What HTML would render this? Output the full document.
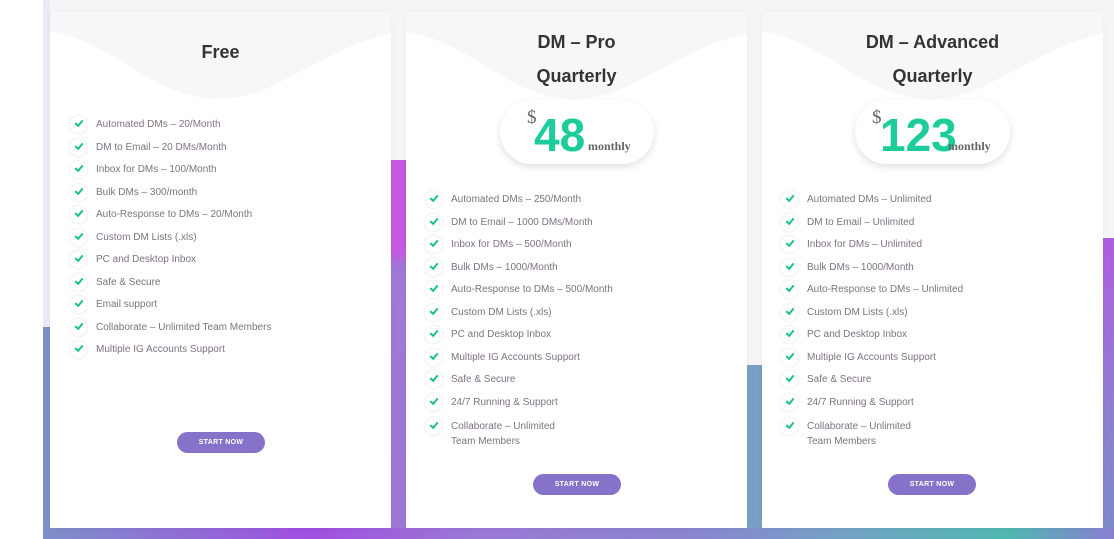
<!DOCTYPE html>
<html><head><meta charset="utf-8">
<style>
*{margin:0;padding:0;box-sizing:border-box}
body{width:1114px;height:539px;overflow:hidden;background:#fff;position:relative;font-family:"Liberation Sans",sans-serif}
.bg{position:absolute}
.card{position:absolute;top:12px;height:516px;background:#fff;border-radius:4px;overflow:hidden;box-shadow:0 0 6px rgba(0,0,0,.04)}
.wave{position:absolute;left:0;top:0}
.title{position:absolute;left:0;right:0;text-align:center;font-weight:bold;font-size:18px;color:#333}
.pill{position:absolute;height:64px;border-radius:32px;background:#fff;box-shadow:0 3px 8px rgba(0,0,0,.12)}
.dollar{position:absolute;font-family:"Liberation Serif",serif;font-size:19px;color:#666}
.num{position:absolute;font-size:46px;color:#1ccc9b;font-weight:bold}
.mon{position:absolute;font-family:"Liberation Serif",serif;font-weight:bold;font-size:12px;color:#666}
ul{position:absolute;list-style:none}
li{position:relative;height:22.5px;font-size:10px;color:#7d7280;padding-left:26px;line-height:12px}
li::before{content:"";position:absolute;left:0;top:-3px;width:17px;height:17px;border-radius:50%;background:#fff;box-shadow:0 0 3px rgba(0,0,0,.12)}
li::after{content:"";position:absolute;left:5px;top:1px;width:6px;height:3px;border-left:2px solid #1dbf8a;border-bottom:2px solid #1dbf8a;transform:rotate(-50deg)}
li.two{height:40px;line-height:15px}
li.two::before{top:-1px}
li.two::after{top:3px}
.btn{position:absolute;width:88px;height:21px;border-radius:11px;background:#8672c8;color:#fff;font-size:7px;font-weight:bold;text-align:center;line-height:21px;letter-spacing:.3px}
</style></head><body>
<div class="bg" style="left:43px;top:0;width:1071px;height:539px;background:#f5f5f7"></div>
<div class="bg" style="left:43px;top:0;width:7px;height:327px;background:#ebe9f5"></div>
<div class="bg" style="left:43px;top:327px;width:7px;height:212px;background:#7c90c6"></div>
<div class="bg" style="left:391px;top:160px;width:15px;height:379px;background:linear-gradient(#c458e0 0,#c458e0 90px,#9d7ad5 110px,#9a78d4 100%)"></div>
<div class="bg" style="left:747px;top:365px;width:15px;height:174px;background:#78a0c4"></div>
<div class="bg" style="left:1103px;top:238px;width:11px;height:301px;background:linear-gradient(#b05ee0,#8c80d0 60%,#7b8ac8)"></div>
<div class="bg" style="left:43px;top:528px;width:1071px;height:11px;background:linear-gradient(90deg,#7d8fc8 0%,#a04fe0 25%,#9a78d4 40%,#8a84d0 60%,#72a2c4 75%,#4fb7b0 90%,#8a7ed0 100%)"></div>

<!-- Card 1 -->
<div class="card" style="left:50px;width:341px">
<svg class="wave" width="341" height="110"><path d="M0 0H341V22C300 30 270 50 230 70 C190 92 150 92 110 72 C70 50 40 25 0 20Z" fill="#f7f7fa"/></svg>
<div class="title" style="top:30px">Free</div>
<ul style="left:20px;top:107px">
<li>Automated DMs – 20/Month</li><li>DM to Email – 20 DMs/Month</li><li>Inbox for DMs – 100/Month</li><li>Bulk DMs – 300/month</li><li>Auto-Response to DMs – 20/Month</li><li>Custom DM Lists (.xls)</li><li>PC and Desktop Inbox</li><li>Safe &amp; Secure</li><li>Email support</li><li>Collaborate – Unlimited Team Members</li><li>Multiple IG Accounts Support</li>
</ul>
<div class="btn" style="left:127px;top:420px">START NOW</div>
</div>

<!-- Card 2 -->
<div class="card" style="left:406px;width:341px">
<svg class="wave" width="341" height="110"><path d="M0 0H341V22C300 30 270 50 230 70 C190 92 150 92 110 72 C70 50 40 25 0 20Z" fill="#f7f7fa"/></svg>
<div class="title" style="top:20px">DM – Pro</div>
<div class="title" style="top:54px">Quarterly</div>
<div class="pill" style="left:94px;top:88px;width:154px"></div>
<div class="dollar" style="left:121px;top:95px">$</div>
<div class="num" style="left:128px;top:96px">48</div>
<div class="mon" style="left:182px;top:127px">monthly</div>
<ul style="left:19px;top:182px">
<li>Automated DMs – 250/Month</li><li>DM to Email – 1000 DMs/Month</li><li>Inbox for DMs – 500/Month</li><li>Bulk DMs – 1000/Month</li><li>Auto-Response to DMs – 500/Month</li><li>Custom DM Lists (.xls)</li><li>PC and Desktop Inbox</li><li>Multiple IG Accounts Support</li><li>Safe &amp; Secure</li><li>24/7 Running &amp; Support</li><li class="two">Collaborate – Unlimited<br>Team Members</li>
</ul>
<div class="btn" style="left:127px;top:462px">START NOW</div>
</div>

<!-- Card 3 -->
<div class="card" style="left:762px;width:341px">
<svg class="wave" width="341" height="110"><path d="M0 0H341V22C300 30 270 50 230 70 C190 92 150 92 110 72 C70 50 40 25 0 20Z" fill="#f7f7fa"/></svg>
<div class="title" style="top:20px">DM – Advanced</div>
<div class="title" style="top:54px">Quarterly</div>
<div class="pill" style="left:93px;top:88px;width:155px"></div>
<div class="dollar" style="left:110px;top:95px">$</div>
<div class="num" style="left:118px;top:96px">123</div>
<div class="mon" style="left:186px;top:127px">monthly</div>
<ul style="left:19px;top:182px">
<li>Automated DMs – Unlimited</li><li>DM to Email – Unlimited</li><li>Inbox for DMs – Unlimited</li><li>Bulk DMs – 1000/Month</li><li>Auto-Response to DMs – Unlimited</li><li>Custom DM Lists (.xls)</li><li>PC and Desktop Inbox</li><li>Multiple IG Accounts Support</li><li>Safe &amp; Secure</li><li>24/7 Running &amp; Support</li><li class="two">Collaborate – Unlimited<br>Team Members</li>
</ul>
<div class="btn" style="left:126px;top:462px">START NOW</div>
</div>
</body></html>
